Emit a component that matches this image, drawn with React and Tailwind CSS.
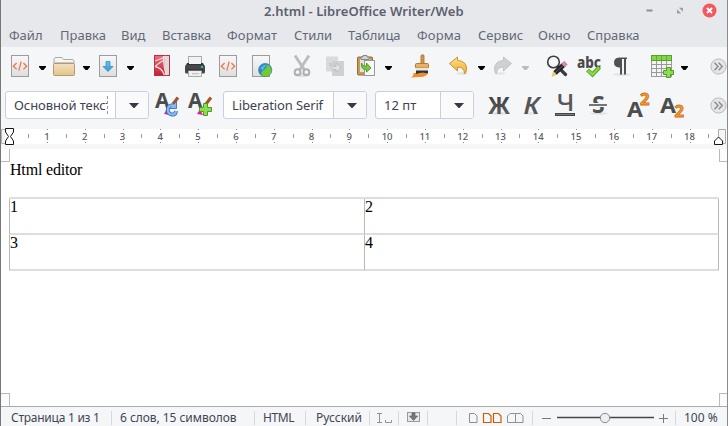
import React from "react";

const UI = "font-['Noto_Sans','Open_Sans',sans-serif]";

function Icon({ className = "", children }) {
  return (
    <svg viewBox="0 0 24 24" className={`h-6 w-6 shrink-0 overflow-visible ${className}`} fill="none">
      {children}
    </svg>
  );
}

function Caret({ className = "", color = "#000" }) {
  return (
    <svg viewBox="0 0 7 4" className={`mt-[3px] h-[4px] w-[7px] shrink-0 ${className}`}>
      <path d="M0 0H7V1L4.5 4H2.5L0 1Z" fill={color} />
    </svg>
  );
}

function Sheet() {
  return <rect x="3.5" y="1.5" width="17" height="21" fill="url(#sheet)" stroke="#9c9d9b" />;
}

function HtmlDoc({ className }) {
  return (
    <Icon className={className}>
      <Sheet />
      <path d="M8.6 9 5.3 12.2 8.6 15.2M15.4 9 18.7 12.2 15.4 15.2M13.2 7.5 10.8 16.7" stroke="#ef7446" strokeWidth="1.2" />
    </Icon>
  );
}

function Expand({ className }) {
  return (
    <svg viewBox="0 0 17 17" className={`h-[17px] w-[17px] shrink-0 ${className}`} fill="none">
      <circle cx="8.5" cy="8.5" r="7.6" fill="#e6e6e7" stroke="#b7b8ba" />
      <path d="M4.5 4.8 8 8.5 4.5 12.2M8.7 4.8 12.2 8.5 8.7 12.2" stroke="#8e8f91" strokeWidth="1.5" />
    </svg>
  );
}

function Defs() {
  return (
    <svg className="absolute h-0 w-0">
      <defs>
        <linearGradient id="sheet" x1="0" y1="0" x2="0" y2="1">
          <stop stopColor="#f8f8f8" />
          <stop offset="1" stopColor="#dedede" />
        </linearGradient>
        <linearGradient id="folder" x1="0" y1="0" x2="0" y2="1">
          <stop stopColor="#f3dfbd" />
          <stop offset="1" stopColor="#e5c48d" />
        </linearGradient>
        <linearGradient id="blue" x1="0" y1="0" x2="0" y2="1">
          <stop stopColor="#74c2ec" />
          <stop offset="1" stopColor="#3096d2" />
        </linearGradient>
        <linearGradient id="pdf" x1="0" y1="0" x2="0" y2="1">
          <stop stopColor="#ec707d" />
          <stop offset="1" stopColor="#bf2336" />
        </linearGradient>
        <linearGradient id="dark" x1="0" y1="0" x2="0" y2="1">
          <stop stopColor="#333" />
          <stop offset="1" stopColor="#666" />
        </linearGradient>
        <linearGradient id="gold" x1="0" y1="0" x2="0" y2="1">
          <stop stopColor="#ffe28a" />
          <stop offset="1" stopColor="#efaa2c" />
        </linearGradient>
      </defs>
    </svg>
  );
}

function TitleBar() {
  return (
    <div className="flex h-[23px] items-center pr-[9px]">
      <div className="w-[645px] pl-[263px] text-[13px] font-semibold leading-[23px] tracking-[0.06px] text-[#5b6070] whitespace-nowrap">
        2.html - LibreOffice Writer/Web
      </div>
      <svg viewBox="0 0 73 16" className="-mt-[3px] h-4 w-[73px] shrink-0" fill="none">
        <path d="M1.500 8.500H7.500" stroke="#8c909c" strokeWidth="2" />
        <path d="M34 5.800H38V9.800ZM32 7.200V11.500H36.300Z" fill="#9a9da8" />
        <circle cx="64.500" cy="8.500" r="7" fill="#f4575f" />
        <path d="M62 6 67 11M67 6 62 11" stroke="#fff" strokeWidth="2" />
      </svg>
    </div>
  );
}

function MenuBar() {
  return (
    <div className="flex h-6 pl-[8px] text-[13px] leading-[25px] text-[#626878] whitespace-nowrap">
      <span className="w-[51px]">Файл</span>
      <span className="w-[61px]">Правка</span>
      <span className="w-[41px]">Вид</span>
      <span className="w-[65px]">Вставка</span>
      <span className="w-[67px] tracking-[0.15px]">Формат</span>
      <span className="w-[54px]">Стили</span>
      <span className="w-[69px]">Таблица</span>
      <span className="w-[61px] tracking-[0.15px]">Форма</span>
      <span className="w-[60px]">Сервис</span>
      <span className="w-[49px]">Окно</span>
      <span>Справка</span>
    </div>
  );
}

function StandardBar() {
  return (
    <div className="flex h-[38px] items-center pl-[7px]">
      <HtmlDoc />
      <Caret className="ml-[7px]" />
      <Icon className="ml-[6px]">
        <path d="M2 8V5L3 3.500H10L11.500 5.500H21L22 7V10H2Z" fill="#f5f5f5" stroke="#aaa" />
        <path d="M2 8.500H22" stroke="#c5c5c5" />
        <rect x="1.500" y="9.500" width="21" height="12" rx="1" fill="url(#folder)" stroke="#b5996c" />
      </Icon>
      <Caret className="ml-[7px]" />
      <Icon className="ml-[6px]">
        <Sheet />
        <path d="M10 7.500H14V12.500H17L12 17.500 7 12.500H10Z" fill="url(#blue)" stroke="#328fc6" strokeWidth="0.800" />
      </Icon>
      <Caret className="ml-[7px]" />
      <Icon className="ml-4">
        <rect x="4.500" y="1.500" width="15" height="20" fill="url(#pdf)" stroke="#ba3040" />
        <path d="M14 2H19V21H15Z" fill="#dedadb" />
        <path d="M16 2Q12 5 5 7M13.500 2Q13.500 15 17 21M5 12.500Q12 14 14.500 21M14 6Q9 9 5 12.500" stroke="#f4d8d9" strokeWidth="1.300" />
      </Icon>
      <Icon className="ml-[9px]">
        <rect x="5.500" y="2.500" width="13" height="9" fill="#f2f2f2" stroke="#aaa" />
        <path d="M4 9H20L21.500 12H2.500Z" fill="#333" />
        <rect x="6" y="3" width="12" height="7" fill="#f2f2f2" />
        <rect x="2" y="11" width="20" height="8.500" rx="1.500" fill="#464748" />
        <path d="M5.500 16.500H18.500V22.500H5.500Z" fill="#efefef" stroke="#aaa" />
        <path d="M9 19.700H16" stroke="#bbb" />
        <rect x="18" y="12" width="2" height="2" fill="#16bddf" />
        <rect x="4" y="15.500" width="16" height="1" fill="#292929" />
      </Icon>
      <HtmlDoc className="ml-[9px]" />
      <Icon className="ml-[9px]">
        <Sheet />
        <circle cx="16.200" cy="16" r="6.600" fill="#258ccb" stroke="#3d7799" strokeWidth="0.700" />
        <path d="M13 21.500C11 18 14 17 16 15C18 13 17 12 19 11C24 14 23.500 22 17 22.400C15.500 22.500 14 22 13 21.500Z" fill="#71cb33" />
        <path d="M11.500 14Q15 10 18 11Q15 13 14 16Q12 16 11.500 14Z" fill="#59b4e6" />
      </Icon>
      <Icon className="ml-[17px]">
        <ellipse cx="12" cy="21" rx="8" ry="2" fill="#e0e0e2" />
        <path d="M5 1.500 14.500 16M19 1.500 9.500 16" stroke="#bcbcbc" strokeWidth="2.900" />
        <circle cx="7.600" cy="18.200" r="2.900" stroke="#b0b0b0" strokeWidth="2" />
        <circle cx="16.400" cy="18.200" r="2.900" stroke="#b0b0b0" strokeWidth="2" />
      </Icon>
      <Icon className="ml-[9px]">
        <rect x="3" y="2.500" width="12" height="15" fill="#dadada" />
        <rect x="9" y="7" width="12" height="15" fill="#cfd0d1" />
        <path d="M7 9Q8 13 13 12.500V9L18 14 13 18V15.500Q7 16 7 9Z" fill="#e1e2e3" stroke="#b6b6b6" strokeWidth="0.700" />
      </Icon>
      <Icon className="ml-[8px]">
        <rect x="2.500" y="3" width="15" height="18" rx="1" fill="#c79a58" stroke="#926d36" />
        <rect x="5" y="5" width="10" height="13" fill="#e2e2df" />
        <path d="M6 5.500V3H8V1.500H12V3H14V5.500Z" fill="#d4d4d4" stroke="#888" />
        <rect x="9.500" y="6.500" width="10" height="15" fill="#f8f8f8" stroke="#999" />
        <path d="M6.500 9Q7 12.500 11.500 12.300V9L16 14 11.500 18V15.800Q5.500 15.500 6.500 9Z" fill="#78c83c" stroke="#4d9324" strokeWidth="0.900" />
      </Icon>
      <Caret className="ml-[6px]" />
      <Icon className="ml-[17px]">
        <path d="M1.500 23.500Q5 22 4.500 19H19Q17 23.500 10 23Z" fill="#f58a28" />
        <path d="M12 2Q12 0.700 13.500 0.700T15 2V10H12Z" fill="#d99a46" stroke="#9d6d2c" strokeWidth="0.800" />
        <rect x="6.500" y="9.500" width="13" height="4.500" rx="1" fill="#e8b265" stroke="#b47b32" />
        <rect x="7" y="14" width="12" height="2.500" fill="#e6e8e8" />
        <path d="M7 16.500H19V19.500Q13 18 7 20Z" fill="#333" />
      </Icon>
      <Icon className="ml-[13px]">
        <ellipse cx="16" cy="19.500" rx="6" ry="1.500" fill="#e5e5e5" />
        <path d="M3.500 9.500 11.500 3V6.500Q21 7 20.500 15.500Q20.500 18 18.500 20Q18.500 13 11.500 13V17Z" fill="url(#gold)" stroke="#cc9339" />
      </Icon>
      <Caret className="ml-[8px]" />
      <Icon className="ml-[6px]">
        <ellipse cx="9" cy="19.500" rx="6" ry="1.500" fill="#e8e8e9" />
        <path d="M20.500 9.500 12.500 3V6.500Q3.500 7 3.500 15.500Q3.500 18 5.500 20Q5.500 13 12.500 13V17Z" fill="#cfd0d1" stroke="#c2c3c4" />
      </Icon>
      <Caret className="ml-[7px]" color="#bbbcbe" />
      <Icon className="ml-4">
        <circle cx="8.500" cy="8" r="5.800" stroke="#3b3c3d" strokeWidth="1.600" />
        <path d="M13 13 20.500 20.500" stroke="#3b3c3d" strokeWidth="3.200" strokeLinecap="round" />
        <path d="M10 19 19 10.500" stroke="#252525" strokeWidth="5" />
        <path d="M10 19 19 10.500" stroke="#5b5b5b" strokeWidth="1" />
        <path d="M18 11.500 21 8.700" stroke="#d782b8" strokeWidth="5" />
        <path d="M8 17.500 11.500 21 6.500 23Z" fill="#e8cb59" />
      </Icon>
      <Icon className="ml-[8px]">
        <text x="0" y="13.500" fontSize="15.500" fontWeight="800" fill="#49494b" textLength="24" lengthAdjust="spacingAndGlyphs" className={UI}>abc</text>
        <path d="M10.500 16 15.500 20.500 22.500 13" stroke="#5aa427" strokeWidth="4.200" />
        <path d="M11 16.500 15.500 20.500 22 13.500" stroke="#8ad548" strokeWidth="2.400" />
      </Icon>
      <Icon className="ml-[9px]">
        <ellipse cx="12" cy="20.500" rx="9" ry="1.500" fill="#e2e3e4" />
        <path d="M16 3.500H9Q4 4 4 8.500T9 13.500H10V20.500H12V5H14V20.500H16V5H17V3.500Z" fill="#505153" />
      </Icon>
      <Icon className="ml-4">
        <rect x="1.500" y="1.500" width="20" height="21" fill="#f3f3f3" stroke="#9b9b9b" />
        <path d="M6.500 7V22M11.500 7V22M16.500 7V22M2 10.500H21M2 14.500H21M2 18.500H21" stroke="#999" />
        <rect x="1.500" y="1.500" width="20" height="5" fill="#83d646" stroke="#57a229" />
        <path d="M6.500 2V6M11.500 2V6M16.500 2V6" stroke="#63b031" />
        <path d="M16.500 13.500H20.500V16.500H23.500V20.500H20.500V23.500H16.500V20.500H13.500V16.500H16.500Z" fill="#8add4c" stroke="#52982b" />
      </Icon>
      <Caret className="ml-[7px]" />
      <Expand className="ml-[22px]" />
    </div>
  );
}

function Combo({ className, children, clip = "" }) {
  return (
    <div className={`flex h-7 shrink-0 overflow-hidden rounded-[3px] border border-[#c9cfe2] bg-white text-[13px] leading-[26px] text-[#3d4252] ${className}`}>
      <div className="relative min-w-0 flex-1 overflow-hidden whitespace-nowrap pl-[8px]">
        <div className={`overflow-hidden ${clip}`}>{children}</div>
      </div>
      <div className="flex w-[33px] items-center justify-center border-l border-[#c9cfe2] bg-[#fafafb]">
        <svg viewBox="0 0 10 5" className="ml-[4px] h-[5px] w-[10px]"><path d="M0 0H10L5.500 5H4.500Z" fill="#363a47" /></svg>
      </div>
    </div>
  );
}

function StyleA() {
  return (
    <>
      <path d="M9 21 12 16 15 22Z" fill="#e01ba8" />
      <path d="M23 4.500 18 11" stroke="#a75322" strokeWidth="3" />
      <text x="0" y="15" fontSize="22" fontWeight="700" fill="#4a4b4d" textLength="14.500" lengthAdjust="spacingAndGlyphs" className={UI}>A</text>
    </>
  );
}

function FormatBar() {
  return (
    <div className="flex h-[44px] items-center pb-[4px] pl-[4px]">
      <Combo className="w-[144px]" clip="w-[93px]">
        <span className="tracking-[-0.080px]">Основной текст</span>
        <span className="absolute left-[101px] top-[4px] h-[18px] border-l border-dashed border-[#999]" />
      </Combo>
      <Icon className="ml-[6px]">
        <StyleA />
        <path d="M20.500 13Q15 11 13 15Q11.500 20 16.500 21.500Q20.500 22 21 18" stroke="#2d68b8" strokeWidth="3.800" />
        <path d="M21.500 8.500V15.500H14.500Z" fill="#86b9f1" stroke="#2d68b8" strokeWidth="0.800" />
        <path d="M20.500 13Q15 11 13 15Q11.500 20 16.500 21.500Q20.500 22 21 18" stroke="#86b9f1" strokeWidth="2.200" />
      </Icon>
      <Icon className="ml-[9px]">
        <StyleA />
        <path d="M15.500 10.500H19.500V14.500H23.500V18.500H19.500V22.500H15.500V18.500H11.500V14.500H15.500Z" fill="#8add4c" stroke="#52982b" />
      </Icon>
      <Combo className="ml-[11px] w-[144px]">
        <span className="tracking-[-0.120px]">Liberation Serif</span>
      </Combo>
      <Combo className="ml-[8px] w-[99px]">12 пт</Combo>
      <Icon className="ml-[14px]">
        <ellipse cx="11.500" cy="20.500" rx="10" ry="1.200" fill="#dddedf" />
        <text x="0" y="20.500" fontSize="23" fontWeight="700" fill="url(#dark)" textLength="22" lengthAdjust="spacingAndGlyphs" className={UI}>Ж</text>
      </Icon>
      <Icon className="ml-[10px]">
        <ellipse cx="9" cy="20.500" rx="8" ry="1.200" fill="#e3e4e5" />
        <text x="1.500" y="20.500" fontSize="23" fontWeight="600" fontStyle="italic" fill="#555657" textLength="16" lengthAdjust="spacingAndGlyphs" className={UI}>К</text>
      </Icon>
      <Icon className="ml-[9px]">
        <text x="1.500" y="18" fontSize="24" fontWeight="500" fill="#57585a" textLength="18" lengthAdjust="spacingAndGlyphs" className={UI}>Ч</text>
        <rect x="0.500" y="20.500" width="19" height="2" fill="#777b79" stroke="#444746" />
      </Icon>
      <Icon className="ml-[10px]">
        <ellipse cx="10" cy="20.500" rx="9" ry="1.200" fill="#e0e1e2" />
        <text x="3" y="20" fontSize="23" fontWeight="700" fill="#505153" className={UI}>S</text>
        <rect x="0.500" y="10.500" width="17" height="3" fill="#888b89" stroke="#f5f6f8" />
        <path d="M0 12H18" stroke="#737674" strokeWidth="2" />
      </Icon>
      <Icon className="ml-[14px]">
        <text x="0" y="23.500" fontSize="22" fontWeight="700" fill="#4c4d4f" textLength="16" lengthAdjust="spacingAndGlyphs" className={UI}>A</text>
        <text x="13" y="12" fontSize="16.500" fontWeight="700" fill="#f6a23c" stroke="#d3700d" strokeWidth="0.900" className={UI}>2</text>
      </Icon>
      <Icon className="ml-[9px]">
        <text x="0" y="19.500" fontSize="22" fontWeight="700" fill="#4c4d4f" textLength="16" lengthAdjust="spacingAndGlyphs" className={UI}>A</text>
        <text x="14.500" y="23.500" fontSize="16.500" fontWeight="700" fill="#f6a23c" stroke="#d3700d" strokeWidth="0.900" className={UI}>2</text>
      </Icon>
      <Expand className="ml-[26px]" />
    </div>
  );
}

function Ruler() {
  return (
    <div className="relative flex h-[15px] bg-white pl-[27px]">
      {Array.from({ length: 18 }, (_, i) => (
        <div key={i} className="relative flex w-[37.800px] shrink-0 items-center justify-center text-[9.500px] font-medium leading-[15px] text-[#565b63]">
          <span className="absolute left-0 top-[5px] h-[4px] w-px bg-[#999]" />
          <span className="absolute left-[19px] top-0 h-px w-px bg-[#888]" />
          <span className="absolute bottom-px left-[19px] h-px w-px bg-[#888]" />
          {i + 1}
        </div>
      ))}
      <span className="mt-[5px] h-[4px] w-px bg-[#999]" />
      <svg viewBox="0 0 13 18" className="absolute -top-[1px] left-0 h-[18px] w-[13px]" fill="none">
        <path d="M4 1.500H0.500V15.500H4" fill="#f1f2f3" stroke="#b5b5b5" />
        <path d="M4.500 0.500H12.500V4L9.500 8.500 12.500 13V16.500H4.500V13L7.500 8.500 4.500 4Z" fill="#fff" stroke="#171717" />
      </svg>
      <svg viewBox="0 0 13 18" className="absolute -top-[1px] right-0 h-[18px] w-[13px]" fill="none">
        <path d="M4.500 10V1.500H11.500V15.500H9" fill="#f4f5f6" stroke="#aaa" />
        <path d="M0.500 16.500V13L4.500 9 8.500 13V16.500Z" fill="#fff" stroke="#171717" />
      </svg>
    </div>
  );
}

function Document() {
  const cell = "h-[36px] border-l-[#b8b8b8] border-r-[#b8b8b8] border-b-[#dedede] font-['Liberation_Serif',serif] text-[16px] leading-[15px]";
  return (
    <div className="relative mt-[5px] h-[257px] bg-white pl-[8px] text-black">
      <span className="absolute left-0 top-0 h-[13px] w-[9px] border-b border-r border-[#bbb] bg-[#fcfcfc]" />
      <span className="absolute right-0 top-0 h-[13px] w-[8px] border-b border-l border-[#bbb] bg-[#fcfcfc]" />
      <span className="absolute bottom-0 left-0 h-[13px] w-[9px] border-r border-t border-[#bbb] bg-[#fcfcfc]" />
      <span className="absolute bottom-0 right-0 h-[13px] w-[8px] border-l border-t border-[#bbb] bg-[#fcfcfc]" />
      <div className="ml-px h-[48px] pt-[12px] font-['Liberation_Serif',serif] text-[16px] leading-[18px] tracking-[-0.180px]">Html editor</div>
      <div className="grid w-[710px] grid-cols-[355px_355px] border-t-2 border-[#dedede]">
        <div className={`${cell} border-b-2 border-l`}>1</div>
        <div className={`${cell} border-x border-b-2`}>2</div>
        <div className={`${cell} border-b-2 border-l`}>3</div>
        <div className={`${cell} border-x border-b-2`}>4</div>
      </div>
    </div>
  );
}

function Rule({ className }) {
  return <span className={`h-[14px] w-px shrink-0 bg-[#d6d8db] ${className}`} />;
}

function StatusBar() {
  return (
    <div className="flex h-5 items-center border-t border-[#aaa] bg-[#f5f6f8] pl-[10px] pt-[2px] text-[12px] leading-[17px] text-[#414653] whitespace-nowrap">
      <span className="w-[100px] tracking-[-0.250px]">Страница 1 из 1</span>
      <Rule />
      <span className="w-[142px] pl-[8px] tracking-[-0.050px]">6 слов, 15 символов</span>
      <Rule />
      <span className="w-[50px] pl-[8px] tracking-[-0.400px]">HTML</span>
      <Rule />
      <span className="w-[63px] pl-[10px]">Русский</span>
      <Rule />
      <svg viewBox="0 0 28 14" className="h-[14px] w-[28px]" fill="none">
        <path d="M7 2.500H12M9.500 2.500V11.500M7 11.500H12M15.500 9V11.500H21.500V9" stroke="#909194" />
      </svg>
      <Rule />
      <svg viewBox="0 0 28 14" className="h-[14px] w-[28px]" fill="none">
        <rect x="8.500" y="1.500" width="12" height="9" fill="#e7e8e8" stroke="#9a9b9b" />
        <path d="M13 2H16V5H18.500L14.500 9.500 10.500 5H13Z" fill="#777a7c" stroke="#505254" strokeWidth="0.600" />
      </svg>
      <Rule />
      <Rule className="ml-7" />
      <svg viewBox="0 0 75 14" className="h-[14px] w-[75px]" fill="none">
        <path d="M12.500 2.500H17.500L20 5V11.500H12.500Z" stroke="#8b8d90" />
        <path d="M26.500 2.500H31.500L34 5V11.500H26.500ZM36.500 2.500H41.500L44 5V11.500H36.500Z" stroke="#ce5c00" strokeWidth="1.200" />
        <path d="M58.500 11.500H50.500V5L53 2.500H58.500ZM58.500 2.500H63.500L66 5V11.500H58.500Z" stroke="#909194" />
      </svg>
      <Rule />
      <svg viewBox="0 0 142 14" className="h-[14px] w-[142px] shrink-0" fill="none">
        <path d="M9 7.500H18M126 7.500H135M130.500 3V12" stroke="#77797d" />
        <path d="M24 6.500H121" stroke="#45474b" strokeWidth="1.300" />
        <circle cx="72" cy="7" r="4.700" fill="#eee" stroke="#898b8d" />
      </svg>
      <Rule />
      <span className="pl-[8px]">100 %</span>
    </div>
  );
}

export default function App() {
  return (
    <div className={`flex h-[426px] w-[728px] flex-col overflow-hidden border-x border-l-[#777] border-r-[#8b8b8b] bg-[#f5f6f8] ${UI}`}>
      <Defs />
      <div className="h-[47px] bg-[#e7e8eb]">
        <TitleBar />
        <MenuBar />
      </div>
      <StandardBar />
      <FormatBar />
      <Ruler />
      <Document />
      <StatusBar />
    </div>
  );
}
